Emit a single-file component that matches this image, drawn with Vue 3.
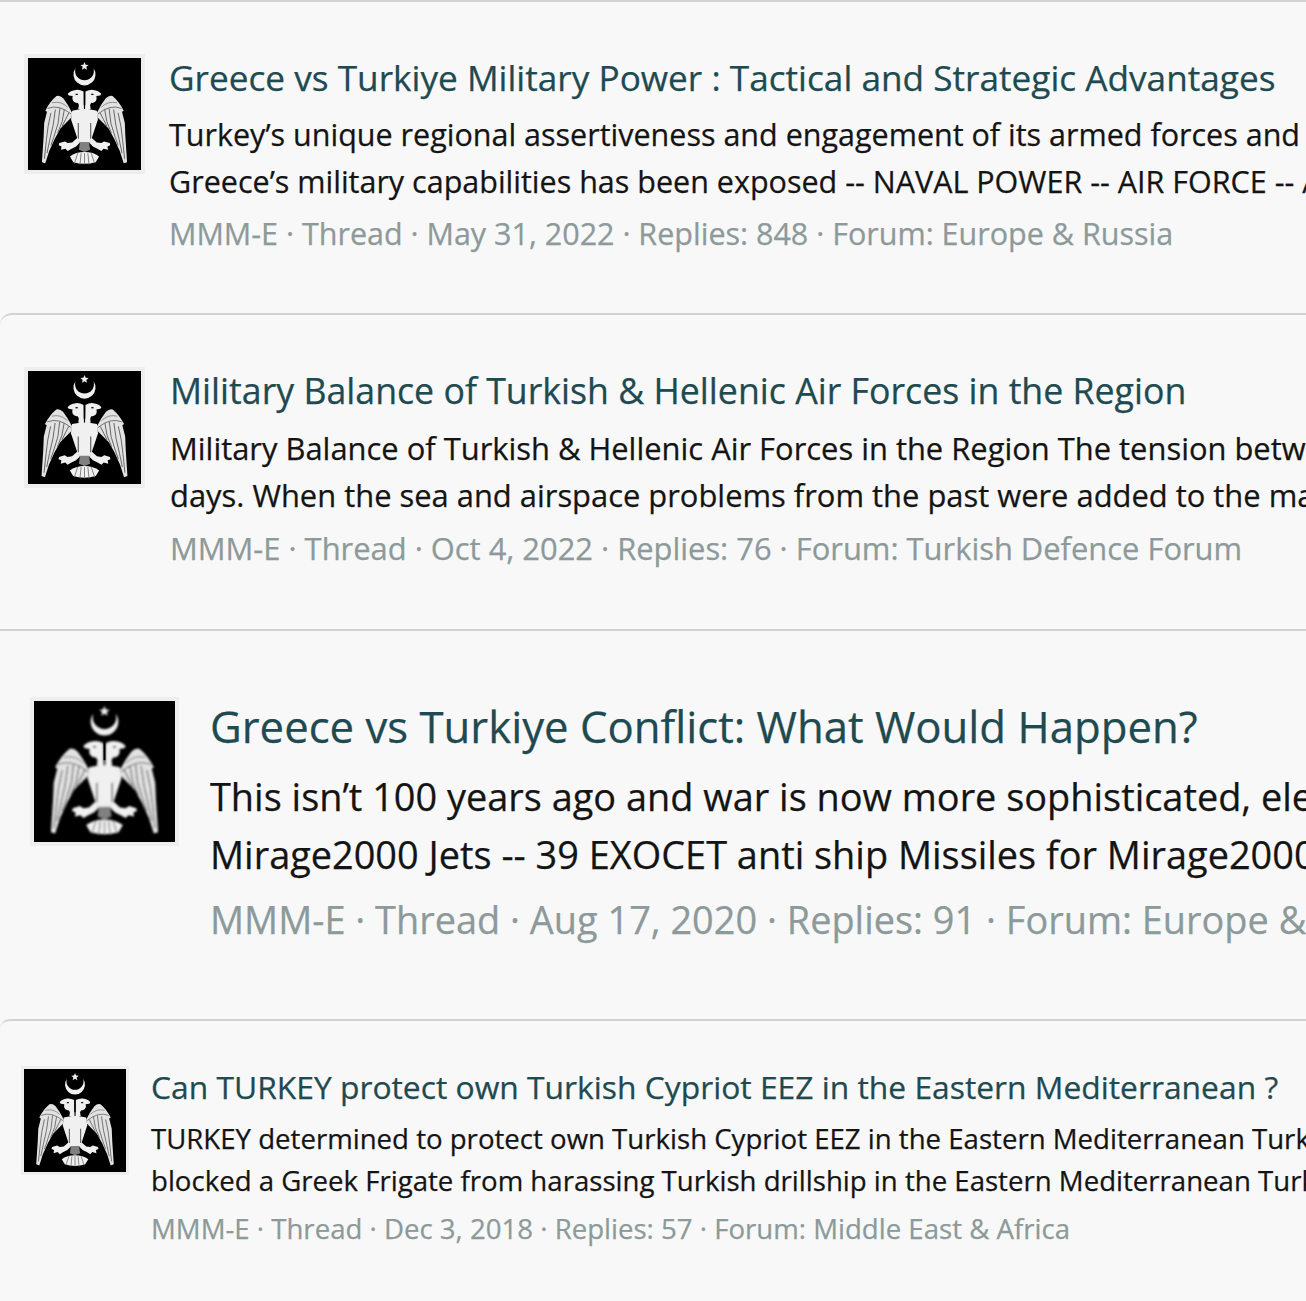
<template>
  <div class="results">
    <div v-for="row in rows" :key="row.title" class="result" :class="row.size">
      <div class="avatar">
        <svg viewBox="0 0 100 100" class="emblem">
          <rect width="100" height="100" fill="#000" />
          <defs>
            <filter id="soft" x="-5%" y="-5%" width="110%" height="110%">
              <feGaussianBlur stdDeviation="0.6" />
            </filter>
          </defs>
          <g filter="url(#soft)" fill="#f0f0f0">
            <!-- star and crescent -->
            <path d="M50 3.500l1 2.500 2.700.2-2.100 1.700.7 2.600-2.300-1.400-2.300 1.400.7-2.600-2.100-1.700 2.700-.2z" />
            <path d="M42 9a9.800 9.800 0 1 0 16 0a8.400 8.400 0 1 1-16 0z" />
            <!-- chest and body -->
            <path d="M39 47q11-3 22 0l1 8q-3 9-6 18l-3 5h-6l-3-5q-3-9-6-18z" />
            <path d="M44.500 58v14M55.500 58v14" stroke="#666" stroke-width="1.100" fill="none" />
            <path d="M46 75h8l1 7-5 2-5-2z" fill="#808080" />
            <!-- tail -->
            <path d="M50 84q8 0 13 4l-3 5q-10 3-20 0l-3-5q5-4 13-4z" />
            <path d="M44 85l-3 9M47 85l-1 10M50 85v10M53 85l1 10M56 85l3 9" stroke="#777" stroke-width="0.8" fill="none" />
            <g v-for="flip in [1, -1]" :key="flip" :transform="flip === -1 ? 'translate(100 0) scale(-1 1)' : ''">
              <!-- head -->
              <path d="M49.300 30q-4-2-7-1.500-5 .5-7.300 3.500l1 1.500 3.500 .5q-1 3 1 5 2.500 1.500 3.500 1l1 2-.5 3.500 5 2z" />
              <path d="M42 32.500h2" stroke="#000" stroke-width="1.100" />
              <!-- wing -->
              <path d="M39 49q-4-8-8-13-3-3-6-2-6 5-10 13l1.500 1-2.500 10-.5 12-1.500 23 3 1 3.500-11 5-11 5-9 10-10z" fill="#e2e2e2" />
              <path d="M20 49l-2.500 12-1.500 12-1.800 17M24 46l-2 14-3 13-2.500 12M28 45l-1.500 13-4 13-2.500 7M32 46l-2 11-4 10M36 49l-3 6-3 6" stroke="#5a5a5a" stroke-width="0.8" fill="none" />
              <path d="M17 45q10-4 21 5" stroke="#666" stroke-width="0.8" fill="none" />
              <path d="M21 40q8-2 14 4" stroke="#777" stroke-width="0.7" fill="none" />
              <!-- foot -->
              <path d="M44 71l-5 4.500-4 .5-2.500-1.500-5 1.500-.5 2 2.500 1-.5 3 4-1 2 2 3.500-2 4-2 3-3z" />
            </g>
          </g>
          <path d="M50 28v14" stroke="#000" stroke-width="1.400" />
        </svg>
      </div>
      <div class="body">
        <h3 class="title">{{ row.title }}</h3>
        <p class="snippet">{{ row.line1 }}</p>
        <p class="snippet">{{ row.line2 }}</p>
        <p class="meta">{{ row.meta }}</p>
      </div>
    </div>
  </div>
</template>

<script setup>
const rows = [
  {
    size: "one",
    title: "Greece vs Turkiye Military Power : Tactical and Strategic Advantages",
    line1: "Turkey’s unique regional assertiveness and engagement of its armed forces and",
    line2: "Greece’s military capabilities has been exposed -- NAVAL POWER -- AIR FORCE -- ARMY",
    meta: "MMM-E · Thread · May 31, 2022 · Replies: 848 · Forum: Europe & Russia",
  },
  {
    size: "two",
    title: "Military Balance of Turkish & Hellenic Air Forces in the Region",
    line1: "Military Balance of Turkish & Hellenic Air Forces in the Region The tension between",
    line2: "days. When the sea and airspace problems from the past were added to the maritime",
    meta: "MMM-E · Thread · Oct 4, 2022 · Replies: 76 · Forum: Turkish Defence Forum",
  },
  {
    size: "three",
    title: "Greece vs Turkiye Conflict: What Would Happen?",
    line1: "This isn’t 100 years ago and war is now more sophisticated, electronic",
    line2: "Mirage2000 Jets -- 39 EXOCET anti ship Missiles for Mirage2000",
    meta: "MMM-E · Thread · Aug 17, 2020 · Replies: 91 · Forum: Europe & Russia",
  },
  {
    size: "four",
    title: "Can TURKEY protect own Turkish Cypriot EEZ in the Eastern Mediterranean ?",
    line1: "TURKEY determined to protect own Turkish Cypriot EEZ in the Eastern Mediterranean Turkey",
    line2: "blocked a Greek Frigate from harassing Turkish drillship in the Eastern Mediterranean Turkey",
    meta: "MMM-E · Thread · Dec 3, 2018 · Replies: 57 · Forum: Middle East & Africa",
  },
];
</script>

<style>
html,
body {
  background: #f8f8f8;
  overflow: hidden;
}
</style>

<style scoped>
.results {
  width: 1306px;
  height: 1301px;
  overflow: hidden;
  background: #f8f8f8;
  font-family: "Open Sans", "Noto Sans", sans-serif;
  -webkit-text-stroke: 0.25px currentColor;
}

.result {
  display: flex;
  align-items: flex-start;
  border-top: 2px solid #d2d2d2;
  box-sizing: border-box;
  white-space: nowrap;
  overflow: hidden;
}

.avatar {
  flex: none;
  box-sizing: border-box;
  border: 4px solid #eeeeee;
  background: #000;
}

.emblem {
  display: block;
  width: 100%;
  height: 100%;
}

.body {
  min-width: 0;
  flex: 1;
}

.title {
  margin: 0;
  font-weight: 400;
  color: #1e4a50;
}

.snippet {
  margin: 0;
  color: #141414;
}

.meta {
  margin: 0;
  color: #8c9a9a;
}

.one {
  height: 313px;
  padding: 52px 0 0 24px;
}
.one .avatar {
  width: 121px;
  height: 120px;
  margin-right: 24px;
}
.one .title {
  font-size: 35.2px;
  line-height: 46px;
  margin-bottom: 11px;
}
.one .snippet {
  font-size: 30.5px;
  line-height: 47px;
}
.one .meta {
  font-size: 30.5px;
  line-height: 57px;
}

.two {
  height: 316px;
  padding: 52px 0 0 24px;
  border-top-left-radius: 12px;
}
.two .avatar {
  width: 121px;
  height: 121px;
  margin-right: 25px;
}
.two .title {
  font-size: 35.7px;
  line-height: 46px;
  margin-bottom: 12px;
}
.two .snippet {
  font-size: 30.9px;
  line-height: 47px;
}
.two .meta {
  font-size: 30.9px;
  line-height: 58px;
}

.three {
  height: 390px;
  padding: 66px 0 0 30px;
}
.three .avatar {
  width: 149px;
  height: 149px;
  margin-right: 31px;
}
.three .title {
  font-size: 43.7px;
  line-height: 58px;
  margin-bottom: 12px;
}
.three .snippet {
  font-size: 37.9px;
  line-height: 58px;
}
.three .meta {
  font-size: 37.9px;
  line-height: 73px;
}

.four {
  height: 282px;
  padding: 44px 0 0 21px;
  border-top-left-radius: 10px;
}
.four .avatar {
  width: 108px;
  height: 109px;
  margin-top: 1px;
  margin-right: 22px;
  border-width: 3px;
}
.four .title {
  font-size: 31.8px;
  line-height: 43px;
  margin-bottom: 9px;
}
.four .snippet {
  font-size: 27.6px;
  line-height: 42px;
}
.four .meta {
  font-size: 27.6px;
  line-height: 54px;
}
</style>
